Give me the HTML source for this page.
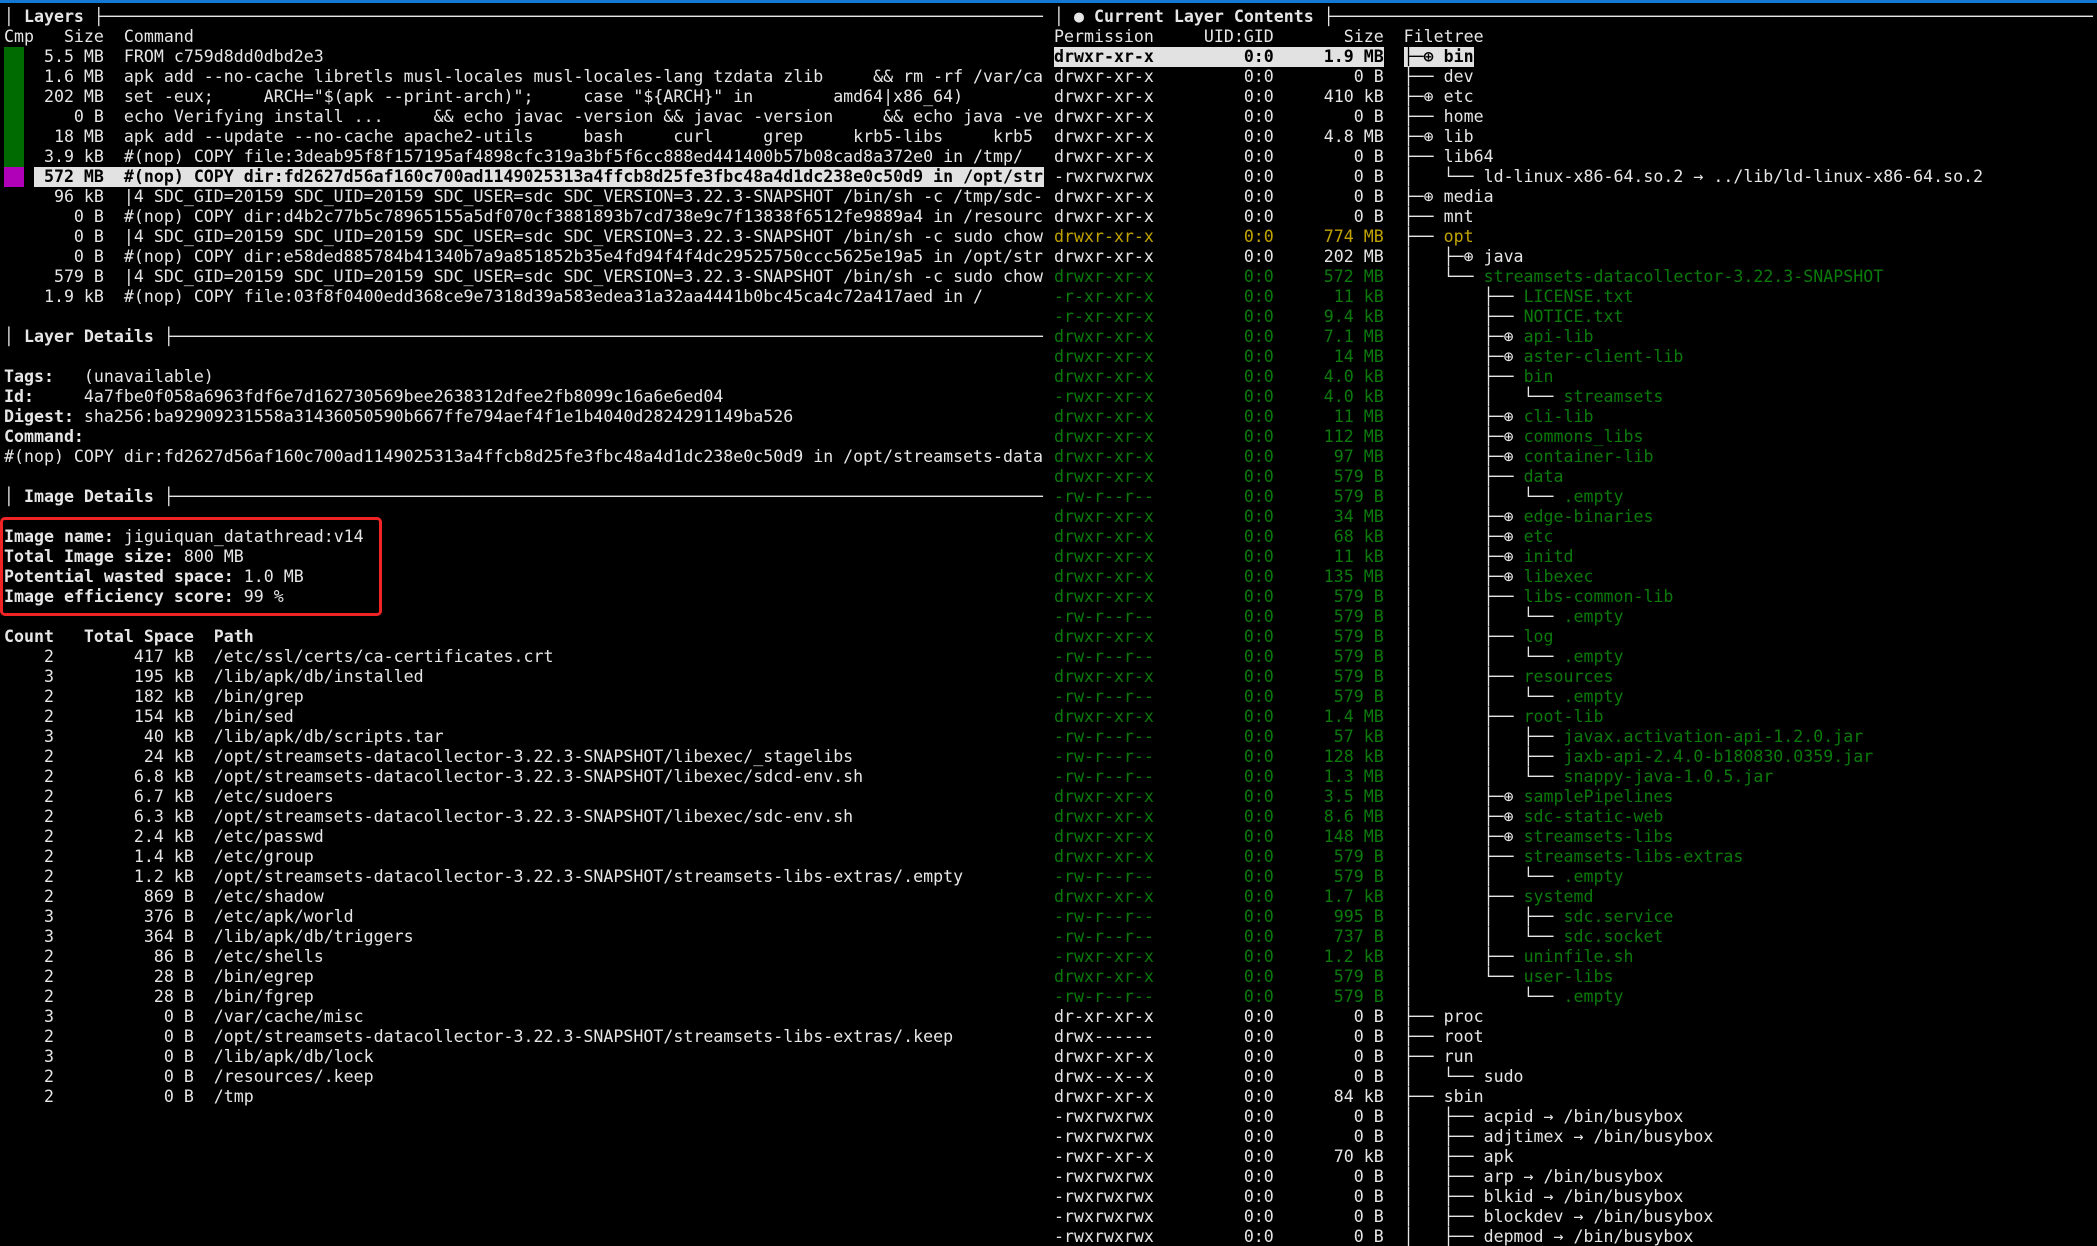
<!DOCTYPE html>
<html><head><meta charset="utf-8">
<style>
html,body{margin:0;padding:0;background:#000;width:2097px;height:1246px;overflow:hidden}
body{position:relative;font-family:"DejaVu Sans Mono","Liberation Mono",monospace;font-size:16.6px;color:#e6e6e6}
pre{margin:0;font:inherit;line-height:20px;white-space:pre;position:absolute}
.b{font-weight:bold}
.top{position:absolute;left:0;top:0;width:2097px;height:3px;background:#1479d2}
.row{position:absolute;height:20px;line-height:20px;white-space:pre}
.g{color:#0b7a0b}
.y{color:#c2a400}
.hl{background:#e2e2e2;color:#000;font-weight:bold}
.s{text-align:right;width:110px}
</style></head><body>
<div class="top"></div>
<div style="position:absolute;left:4px;top:47px;width:20px;height:120px;background:#006b00"></div>
<div style="position:absolute;left:4px;top:167px;width:20px;height:20px;background:#b000b8"></div>
<div style="position:absolute;left:34px;top:167px;width:1010px;height:20px;background:#e2e2e2"></div>
<pre style="left:4px;top:7px;width:1040px;overflow:hidden">│ <span class="b">Layers</span> ├──────────────────────────────────────────────────────────────────────────────────────────────
Cmp   Size  Command
    5.5 MB  FROM c759d8dd0dbd2e3
    1.6 MB  apk add --no-cache libretls musl-locales musl-locales-lang tzdata zlib     &amp;&amp; rm -rf /var/ca
    202 MB  set -eux;     ARCH="$(apk --print-arch)";     case "${ARCH}" in        amd64|x86_64)
       0 B  echo Verifying install ...     &amp;&amp; echo javac -version &amp;&amp; javac -version     &amp;&amp; echo java -ve
     18 MB  apk add --update --no-cache apache2-utils     bash     curl     grep     krb5-libs     krb5
    3.9 kB  #(nop) COPY file:3deab95f8f157195af4898cfc319a3bf5f6cc888ed441400b57b08cad8a372e0 in /tmp/
<span class="b" style="color:#000">    572 MB  #(nop) COPY dir:fd2627d56af160c700ad1149025313a4ffcb8d25fe3fbc48a4d1dc238e0c50d9 in /opt/str</span>
     96 kB  |4 SDC_GID=20159 SDC_UID=20159 SDC_USER=sdc SDC_VERSION=3.22.3-SNAPSHOT /bin/sh -c /tmp/sdc-
       0 B  #(nop) COPY dir:d4b2c77b5c78965155a5df070cf3881893b7cd738e9c7f13838f6512fe9889a4 in /resourc
       0 B  |4 SDC_GID=20159 SDC_UID=20159 SDC_USER=sdc SDC_VERSION=3.22.3-SNAPSHOT /bin/sh -c sudo chow
       0 B  #(nop) COPY dir:e58ded885784b41340b7a9a851852b35e4fd94f4f4dc29525750ccc5625e19a5 in /opt/str
     579 B  |4 SDC_GID=20159 SDC_UID=20159 SDC_USER=sdc SDC_VERSION=3.22.3-SNAPSHOT /bin/sh -c sudo chow
    1.9 kB  #(nop) COPY file:03f8f0400edd368ce9e7318d39a583edea31a32aa4441b0bc45ca4c72a417aed in /

│ <span class="b">Layer Details</span> ├───────────────────────────────────────────────────────────────────────────────────────

<span class="b">Tags:</span>   (unavailable)
<span class="b">Id:</span>     4a7fbe0f058a6963fdf6e7d162730569bee2638312dfee2fb8099c16a6e6ed04
<span class="b">Digest:</span> sha256:ba92909231558a31436050590b667ffe794aef4f1e1b4040d2824291149ba526
<span class="b">Command:</span>
#(nop) COPY dir:fd2627d56af160c700ad1149025313a4ffcb8d25fe3fbc48a4d1dc238e0c50d9 in /opt/streamsets-datacollector

│ <span class="b">Image Details</span> ├───────────────────────────────────────────────────────────────────────────────────────

<span class="b">Image name:</span> jiguiquan_datathread:v14
<span class="b">Total Image size:</span> 800 MB
<span class="b">Potential wasted space:</span> 1.0 MB
<span class="b">Image efficiency score:</span> 99 %

<span class="b">Count   Total Space  Path</span>
    2        417 kB  /etc/ssl/certs/ca-certificates.crt
    3        195 kB  /lib/apk/db/installed
    2        182 kB  /bin/grep
    2        154 kB  /bin/sed
    3         40 kB  /lib/apk/db/scripts.tar
    2         24 kB  /opt/streamsets-datacollector-3.22.3-SNAPSHOT/libexec/_stagelibs
    2        6.8 kB  /opt/streamsets-datacollector-3.22.3-SNAPSHOT/libexec/sdcd-env.sh
    2        6.7 kB  /etc/sudoers
    2        6.3 kB  /opt/streamsets-datacollector-3.22.3-SNAPSHOT/libexec/sdc-env.sh
    2        2.4 kB  /etc/passwd
    2        1.4 kB  /etc/group
    2        1.2 kB  /opt/streamsets-datacollector-3.22.3-SNAPSHOT/streamsets-libs-extras/.empty
    2         869 B  /etc/shadow
    3         376 B  /etc/apk/world
    3         364 B  /lib/apk/db/triggers
    2          86 B  /etc/shells
    2          28 B  /bin/egrep
    2          28 B  /bin/fgrep
    3           0 B  /var/cache/misc
    2           0 B  /opt/streamsets-datacollector-3.22.3-SNAPSHOT/streamsets-libs-extras/.keep
    3           0 B  /lib/apk/db/lock
    2           0 B  /resources/.keep
    2           0 B  /tmp</pre>
<div style="position:absolute;left:0;top:517px;width:376px;height:93px;border:3.5px solid #f02424;border-radius:5px"></div>

<pre style="left:1054px;top:7px">│ ● <span class="b">Current Layer Contents</span> ├────────────────────────────────────────────────────────────────────────────
Permission     UID:GID       Size  Filetree</pre>

<div style="position:absolute;left:1054px;top:47px;width:330px;height:20px;background:#e2e2e2"></div>
<div style="position:absolute;left:1404px;top:47px;width:70px;height:20px;background:#e2e2e2"></div>

<pre style="left:1054px;top:47px;width:1043px;overflow:hidden"><span class="b" style="color:#000">drwxr-xr-x         0:0     1.9 MB  ├─⊕ bin</span>
drwxr-xr-x         0:0        0 B  ├── dev
drwxr-xr-x         0:0     410 kB  ├─⊕ etc
drwxr-xr-x         0:0        0 B  ├── home
drwxr-xr-x         0:0     4.8 MB  ├─⊕ lib
drwxr-xr-x         0:0        0 B  ├── lib64
-rwxrwxrwx         0:0        0 B  │   └── ld-linux-x86-64.so.2 → ../lib/ld-linux-x86-64.so.2
drwxr-xr-x         0:0        0 B  ├─⊕ media
drwxr-xr-x         0:0        0 B  ├── mnt
<span class="y">drwxr-xr-x         0:0     774 MB</span>  ├── <span class="y">opt</span>
drwxr-xr-x         0:0     202 MB  │   ├─⊕ java
<span class="g">drwxr-xr-x         0:0     572 MB</span>  │   └── <span class="g">streamsets-datacollector-3.22.3-SNAPSHOT</span>
<span class="g">-r-xr-xr-x         0:0      11 kB</span>  │       ├── <span class="g">LICENSE.txt</span>
<span class="g">-r-xr-xr-x         0:0     9.4 kB</span>  │       ├── <span class="g">NOTICE.txt</span>
<span class="g">drwxr-xr-x         0:0     7.1 MB</span>  │       ├─⊕ <span class="g">api-lib</span>
<span class="g">drwxr-xr-x         0:0      14 MB</span>  │       ├─⊕ <span class="g">aster-client-lib</span>
<span class="g">drwxr-xr-x         0:0     4.0 kB</span>  │       ├── <span class="g">bin</span>
<span class="g">-rwxr-xr-x         0:0     4.0 kB</span>  │       │   └── <span class="g">streamsets</span>
<span class="g">drwxr-xr-x         0:0      11 MB</span>  │       ├─⊕ <span class="g">cli-lib</span>
<span class="g">drwxr-xr-x         0:0     112 MB</span>  │       ├─⊕ <span class="g">commons_libs</span>
<span class="g">drwxr-xr-x         0:0      97 MB</span>  │       ├─⊕ <span class="g">container-lib</span>
<span class="g">drwxr-xr-x         0:0      579 B</span>  │       ├── <span class="g">data</span>
<span class="g">-rw-r--r--         0:0      579 B</span>  │       │   └── <span class="g">.empty</span>
<span class="g">drwxr-xr-x         0:0      34 MB</span>  │       ├─⊕ <span class="g">edge-binaries</span>
<span class="g">drwxr-xr-x         0:0      68 kB</span>  │       ├─⊕ <span class="g">etc</span>
<span class="g">drwxr-xr-x         0:0      11 kB</span>  │       ├─⊕ <span class="g">initd</span>
<span class="g">drwxr-xr-x         0:0     135 MB</span>  │       ├─⊕ <span class="g">libexec</span>
<span class="g">drwxr-xr-x         0:0      579 B</span>  │       ├── <span class="g">libs-common-lib</span>
<span class="g">-rw-r--r--         0:0      579 B</span>  │       │   └── <span class="g">.empty</span>
<span class="g">drwxr-xr-x         0:0      579 B</span>  │       ├── <span class="g">log</span>
<span class="g">-rw-r--r--         0:0      579 B</span>  │       │   └── <span class="g">.empty</span>
<span class="g">drwxr-xr-x         0:0      579 B</span>  │       ├── <span class="g">resources</span>
<span class="g">-rw-r--r--         0:0      579 B</span>  │       │   └── <span class="g">.empty</span>
<span class="g">drwxr-xr-x         0:0     1.4 MB</span>  │       ├── <span class="g">root-lib</span>
<span class="g">-rw-r--r--         0:0      57 kB</span>  │       │   ├── <span class="g">javax.activation-api-1.2.0.jar</span>
<span class="g">-rw-r--r--         0:0     128 kB</span>  │       │   ├── <span class="g">jaxb-api-2.4.0-b180830.0359.jar</span>
<span class="g">-rw-r--r--         0:0     1.3 MB</span>  │       │   └── <span class="g">snappy-java-1.0.5.jar</span>
<span class="g">drwxr-xr-x         0:0     3.5 MB</span>  │       ├─⊕ <span class="g">samplePipelines</span>
<span class="g">drwxr-xr-x         0:0     8.6 MB</span>  │       ├─⊕ <span class="g">sdc-static-web</span>
<span class="g">drwxr-xr-x         0:0     148 MB</span>  │       ├─⊕ <span class="g">streamsets-libs</span>
<span class="g">drwxr-xr-x         0:0      579 B</span>  │       ├── <span class="g">streamsets-libs-extras</span>
<span class="g">-rw-r--r--         0:0      579 B</span>  │       │   └── <span class="g">.empty</span>
<span class="g">drwxr-xr-x         0:0     1.7 kB</span>  │       ├── <span class="g">systemd</span>
<span class="g">-rw-r--r--         0:0      995 B</span>  │       │   ├── <span class="g">sdc.service</span>
<span class="g">-rw-r--r--         0:0      737 B</span>  │       │   └── <span class="g">sdc.socket</span>
<span class="g">-rwxr-xr-x         0:0     1.2 kB</span>  │       ├── <span class="g">uninfile.sh</span>
<span class="g">drwxr-xr-x         0:0      579 B</span>  │       └── <span class="g">user-libs</span>
<span class="g">-rw-r--r--         0:0      579 B</span>  │           └── <span class="g">.empty</span>
dr-xr-xr-x         0:0        0 B  ├── proc
drwx------         0:0        0 B  ├── root
drwxr-xr-x         0:0        0 B  ├── run
drwx--x--x         0:0        0 B  │   └── sudo
drwxr-xr-x         0:0      84 kB  ├── sbin
-rwxrwxrwx         0:0        0 B  │   ├── acpid → /bin/busybox
-rwxrwxrwx         0:0        0 B  │   ├── adjtimex → /bin/busybox
-rwxr-xr-x         0:0      70 kB  │   ├── apk
-rwxrwxrwx         0:0        0 B  │   ├── arp → /bin/busybox
-rwxrwxrwx         0:0        0 B  │   ├── blkid → /bin/busybox
-rwxrwxrwx         0:0        0 B  │   ├── blockdev → /bin/busybox
-rwxrwxrwx         0:0        0 B  │   ├── depmod → /bin/busybox</pre>
</body></html>
